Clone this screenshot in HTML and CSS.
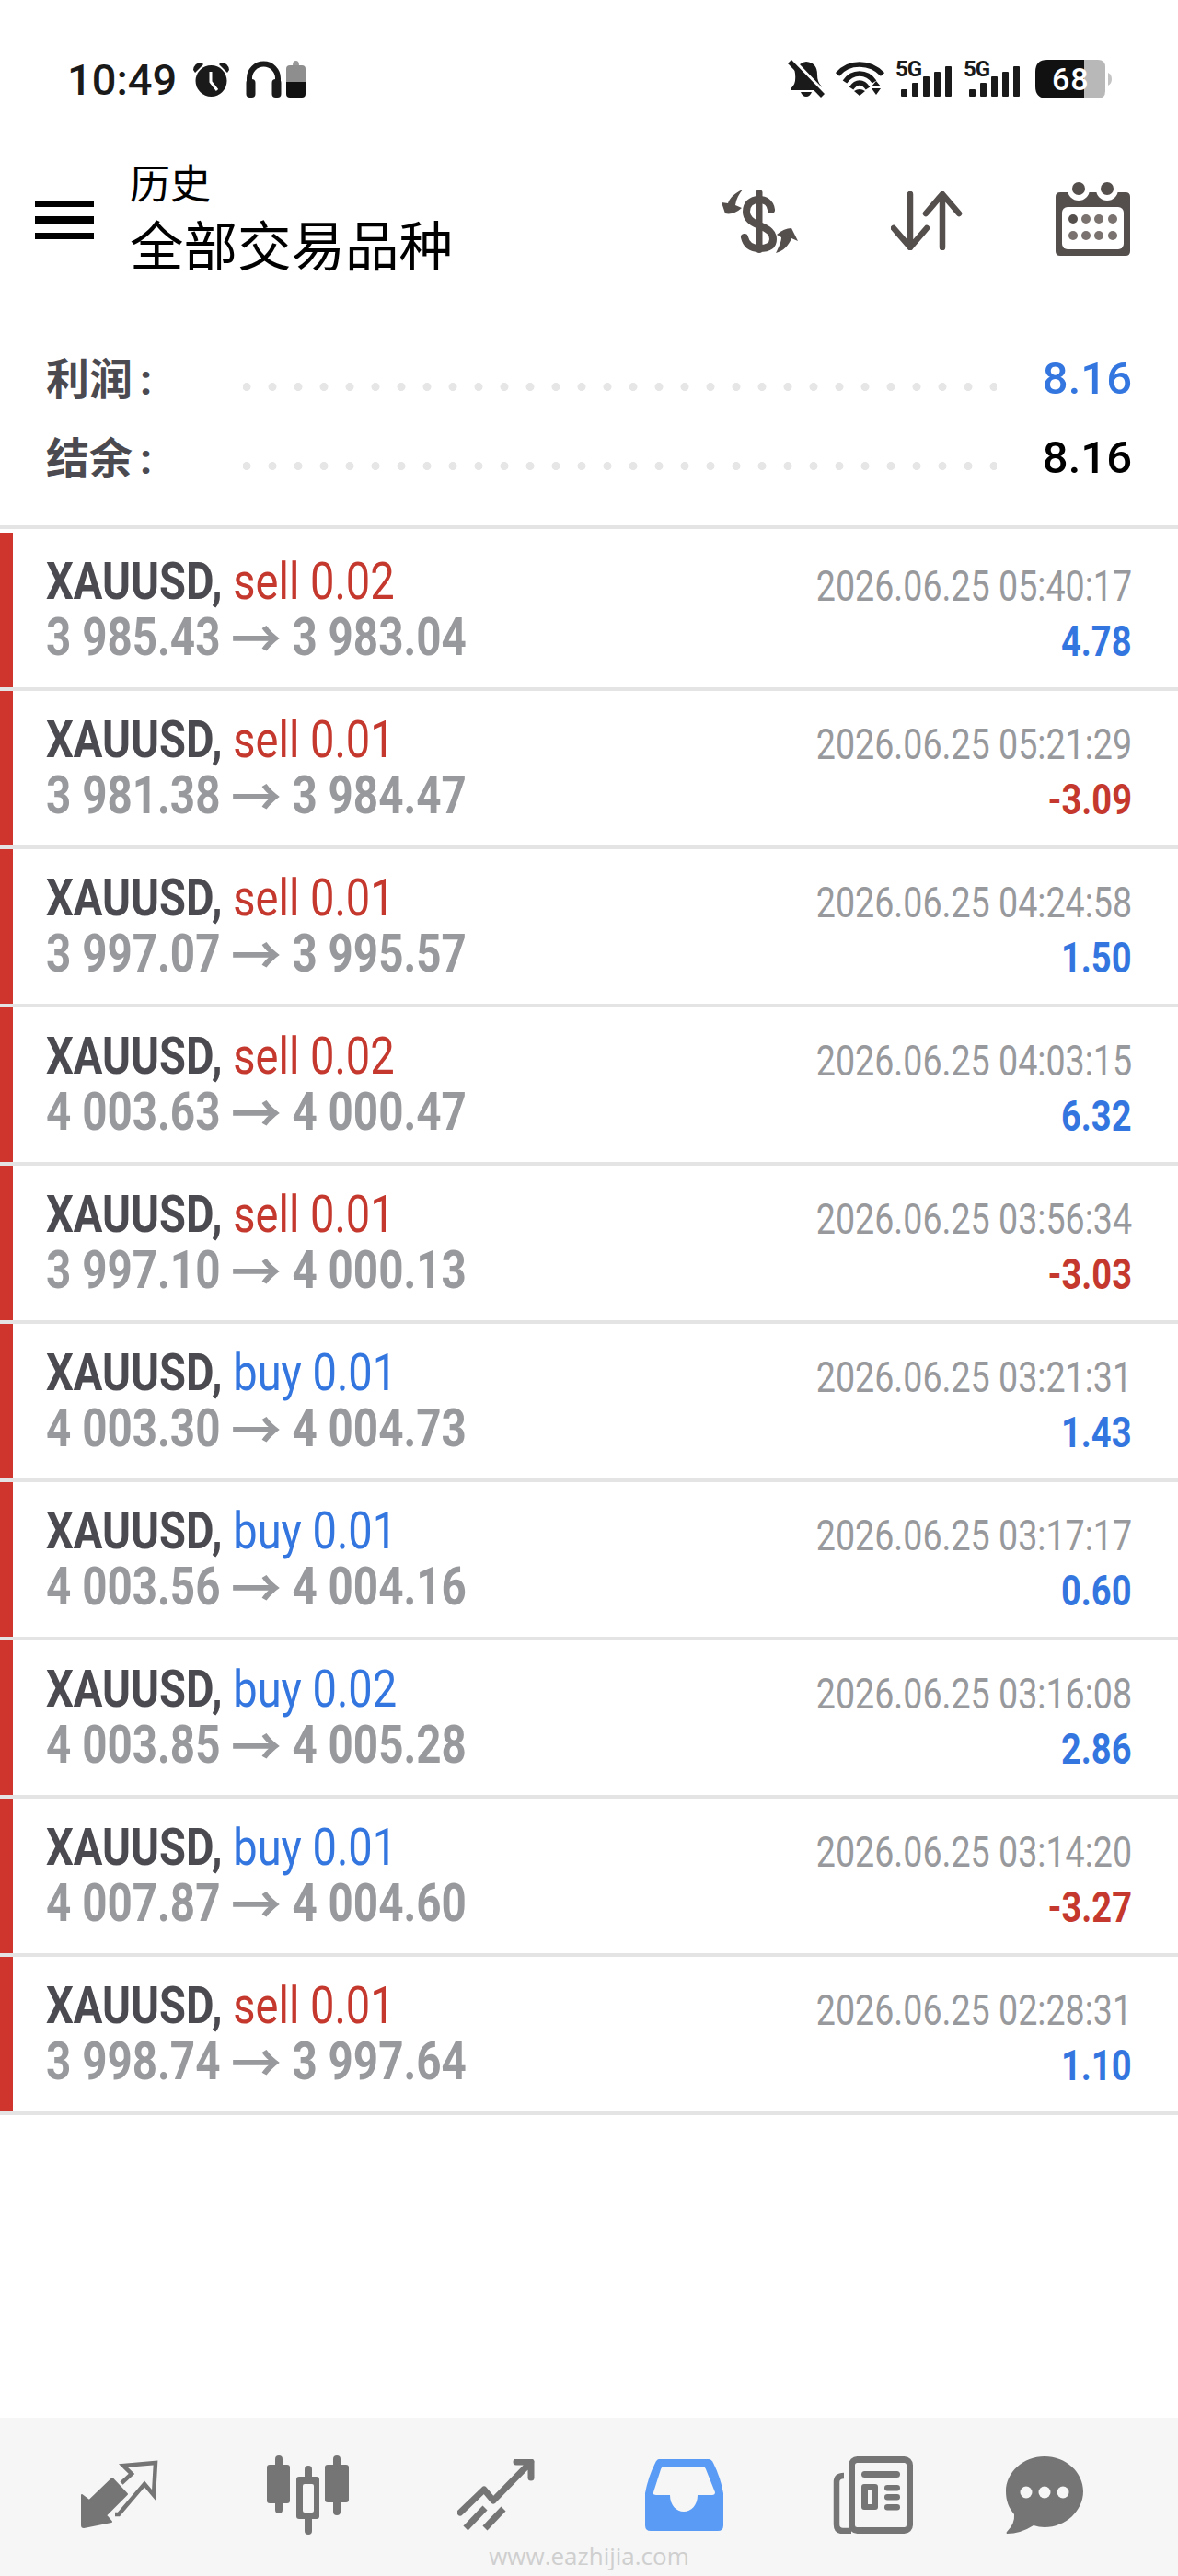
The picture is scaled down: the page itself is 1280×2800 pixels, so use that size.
FILE: index.html
```html
<!DOCTYPE html>
<html lang="zh">
<head>
<meta charset="utf-8">
<title>历史</title>
<link rel="stylesheet" href="styles.css">
</head>
<body>
<div class="page">
  <header class="status">
    <span class="time">10:49</span>
    <svg class="ic-alarm" viewBox="0 0 41 38"><circle cx="20.5" cy="21" r="17" fill="#1a1a1a"/><path d="M20 11v11l7 9" fill="none" stroke="#fff" stroke-width="3"/><path d="M1 9Q2 1 10 1L12 3 3 12Z M40 9Q39 1 31 1L29 3 38 12Z" fill="#1a1a1a"/></svg>
    <svg class="ic-phones" viewBox="0 0 39 40"><path d="M4 24V19a15.500 15.500 0 0 1 31 0v5" fill="none" stroke="#1a1a1a" stroke-width="6"/><rect x="0.500" y="20" width="10" height="20" rx="4" fill="#1a1a1a"/><rect x="28.500" y="20" width="10" height="20" rx="4" fill="#1a1a1a"/></svg>
    <svg class="ic-minibat" viewBox="0 0 21 40"><path d="M7 5Q7 0 10.500 0T14 5Z" fill="#999"/><path d="M0 23V9Q0 5 4 5H17Q21 5 21 9V23Z" fill="#8e8e8e"/><path d="M0 23H21V36Q21 40 17 40H4Q0 40 0 36Z" fill="#111"/></svg>
    <div class="status-right">
      <svg class="ic-bell" viewBox="0 0 40 42"><path d="M7 9 29 33H3Q3 31 6 28 9 24 8 15ZM13 5Q17 2 20 2 32 3 32 16 32 24 36 28L37 30Z" fill="#1a1a1a"/><path d="M14 35H26Q24 40 20 40T14 35Z" fill="#1a1a1a"/><path d="M2 2 38 39" stroke="#1a1a1a" stroke-width="5.500" fill="none"/></svg>
      <svg class="ic-wifi" viewBox="0 0 53 38"><g fill="none" stroke="#1a1a1a" stroke-width="5.500"><path d="M2 14Q11 3 26 3T51 14"/><path d="M10 22Q16 13 26 13T42 22"/><path d="M17 29Q21 23 26 23T35 29"/></g><path d="M20 32 26 37 32 32Q26 28 20 32Z M44 21 49 27H39Z M44 36 49 29H39Z" fill="#1a1a1a"/></svg>
      <svg class="ic-signal" viewBox="0 -8 62 48"><text class="net" x="0" y="17">5G</text><g fill="#1a1a1a"><rect x="6" y="31" width="7" height="8" rx="1"/><rect x="18" y="24" width="7" height="15" rx="1"/><rect x="30" y="17" width="7" height="22" rx="1"/><rect x="42" y="12" width="7" height="27" rx="1"/><rect x="54" y="6" width="7" height="33" rx="1"/></g></svg>
      <svg class="ic-signal" viewBox="0 -8 62 48"><text class="net" x="0" y="17">5G</text><g fill="#1a1a1a"><rect x="6" y="31" width="7" height="8" rx="1"/><rect x="18" y="24" width="7" height="15" rx="1"/><rect x="30" y="17" width="7" height="22" rx="1"/><rect x="42" y="12" width="7" height="27" rx="1"/><rect x="54" y="6" width="7" height="33" rx="1"/></g></svg>
      <svg class="ic-battery" viewBox="0 0 83 42"><path d="M53 0H68Q76 0 76 8V34Q76 42 68 42H53Z" fill="#b8b8b8"/><path d="M13 0H53V42H13Q0 42 0 29V13Q0 0 13 0Z" fill="#111"/><path d="M79 14Q83 16 83 21T79 28Z" fill="#c4c4c4"/><text class="batt" x="18" y="33">68</text></svg>
    </div>
  </header>

  <div class="appbar">
    <div class="burger"><i></i><i></i><i></i></div>
    <div class="titles">
      <div class="title-sm">历史</div>
      <div class="title-lg">全部交易品种</div>
    </div>
    <div class="actions">
      <svg class="ic-dollar" viewBox="0 0 84 71"><g fill="#544e4c"><rect x="38.500" y="1" width="7" height="69" rx="3.500"/><path d="M24 1C15 5 10 10 8 16L1 15 5 27Q14 29 23 21L16 18C17 11 20 6 24 1Z"/><path d="M60 70C64 62 66 57 66 53L61 50Q69 43 77 43L84 57 77 54C74 62 68 68 60 70Z"/></g><path d="M55 23C54 15 48 12 42 12 32 12 28 18 28 25 28 33 34 37 42 40 52 44 57 48 57 55 57 63 50 65 42 65 34 65 28 62 26 53" fill="none" stroke="#544e4c" stroke-width="8" stroke-linecap="round"/></svg>
      <svg class="ic-sort" viewBox="0 0 78 64"><g fill="none" stroke="#544e4c" stroke-width="6.500" stroke-linecap="round" stroke-linejoin="round"><path d="M21 3V61M3 40 21 61 39 40"/><path d="M56 61V4M38 24 56 3 74 24"/></g></svg>
      <svg class="ic-cal" viewBox="0 0 81 80"><path d="M5 11H76Q81 11 81 16V75Q81 80 76 80H5Q0 80 0 75V16Q0 11 5 11Z" fill="#544e4c"/><circle cx="25" cy="8" r="12" fill="#fff"/><circle cx="56" cy="8" r="12" fill="#fff"/><circle cx="25" cy="7" r="7" fill="#544e4c"/><circle cx="56" cy="7" r="7" fill="#544e4c"/><rect x="7" y="27" width="67" height="46" rx="6" fill="#fff"/><g fill="#7a726e"><circle cx="19" cy="40" r="5" fill="#544e4c"/><circle cx="33" cy="40" r="5"/><circle cx="47" cy="40" r="5"/><circle cx="62" cy="40" r="5"/><circle cx="19" cy="58" r="5"/><circle cx="33" cy="58" r="5"/><circle cx="47" cy="58" r="5"/><circle cx="62" cy="58" r="5"/></g></svg>
    </div>
  </div>

  <section class="summary">
    <div class="sum-row"><span class="sum-label">利润<span class="colon">:</span></span><span class="dots"></span><span class="sum-value blue">8.16</span></div>
    <div class="sum-row"><span class="sum-label">结余<span class="colon">:</span></span><span class="dots"></span><span class="sum-value">8.16</span></div>
  </section>

  <main class="list">
    <div class="row"><div class="row-text"><div class="line"><span class="sym">XAUUSD,</span> <span class="red">sell 0.02</span></div><div class="line price">3 985.43 <span class="arrow">→</span> 3 983.04</div></div><div class="row-side"><span class="date">2026.06.25 05:40:17</span><span class="pnl blue">4.78</span></div></div>
    <div class="row"><div class="row-text"><div class="line"><span class="sym">XAUUSD,</span> <span class="red">sell 0.01</span></div><div class="line price">3 981.38 <span class="arrow">→</span> 3 984.47</div></div><div class="row-side"><span class="date">2026.06.25 05:21:29</span><span class="pnl red">-3.09</span></div></div>
    <div class="row"><div class="row-text"><div class="line"><span class="sym">XAUUSD,</span> <span class="red">sell 0.01</span></div><div class="line price">3 997.07 <span class="arrow">→</span> 3 995.57</div></div><div class="row-side"><span class="date">2026.06.25 04:24:58</span><span class="pnl blue">1.50</span></div></div>
    <div class="row"><div class="row-text"><div class="line"><span class="sym">XAUUSD,</span> <span class="red">sell 0.02</span></div><div class="line price">4 003.63 <span class="arrow">→</span> 4 000.47</div></div><div class="row-side"><span class="date">2026.06.25 04:03:15</span><span class="pnl blue">6.32</span></div></div>
    <div class="row"><div class="row-text"><div class="line"><span class="sym">XAUUSD,</span> <span class="red">sell 0.01</span></div><div class="line price">3 997.10 <span class="arrow">→</span> 4 000.13</div></div><div class="row-side"><span class="date">2026.06.25 03:56:34</span><span class="pnl red">-3.03</span></div></div>
    <div class="row"><div class="row-text"><div class="line"><span class="sym">XAUUSD,</span> <span class="blue">buy 0.01</span></div><div class="line price">4 003.30 <span class="arrow">→</span> 4 004.73</div></div><div class="row-side"><span class="date">2026.06.25 03:21:31</span><span class="pnl blue">1.43</span></div></div>
    <div class="row"><div class="row-text"><div class="line"><span class="sym">XAUUSD,</span> <span class="blue">buy 0.01</span></div><div class="line price">4 003.56 <span class="arrow">→</span> 4 004.16</div></div><div class="row-side"><span class="date">2026.06.25 03:17:17</span><span class="pnl blue">0.60</span></div></div>
    <div class="row"><div class="row-text"><div class="line"><span class="sym">XAUUSD,</span> <span class="blue">buy 0.02</span></div><div class="line price">4 003.85 <span class="arrow">→</span> 4 005.28</div></div><div class="row-side"><span class="date">2026.06.25 03:16:08</span><span class="pnl blue">2.86</span></div></div>
    <div class="row"><div class="row-text"><div class="line"><span class="sym">XAUUSD,</span> <span class="blue">buy 0.01</span></div><div class="line price">4 007.87 <span class="arrow">→</span> 4 004.60</div></div><div class="row-side"><span class="date">2026.06.25 03:14:20</span><span class="pnl red">-3.27</span></div></div>
    <div class="row"><div class="row-text"><div class="line"><span class="sym">XAUUSD,</span> <span class="red">sell 0.01</span></div><div class="line price">3 998.74 <span class="arrow">→</span> 3 997.64</div></div><div class="row-side"><span class="date">2026.06.25 02:28:31</span><span class="pnl blue">1.10</span></div></div>
  </main>

  <nav class="nav">
    <svg class="n1" viewBox="0 0 84 76"><path d="M1 38 9 44 34 20 50 37 27 60 33 67 3 73Q1 73 1 71Z" fill="#757575" stroke="#757575" stroke-width="2" stroke-linejoin="round"/><path d="M44 25 55 15 46 6 81 3 79 38 69 26 41 59H37" fill="none" stroke="#757575" stroke-width="4.500"/></svg>
    <svg class="n2" viewBox="0 0 89 86"><g fill="#757575"><rect x="0" y="10" width="25" height="42" rx="3"/><rect x="9" y="0" width="8" height="63" rx="4"/><rect x="63" y="10" width="26" height="41" rx="3"/><rect x="72" y="0" width="8" height="65" rx="4"/><rect x="41" y="11" width="8" height="75" rx="4"/><rect x="32" y="23" width="25" height="46" rx="3"/></g><rect x="39" y="31" width="12" height="31" rx="2" fill="#f6f6f6"/></svg>
    <svg class="n3" viewBox="0 0 84 78"><g fill="none" stroke="#757575" stroke-width="7" stroke-linecap="round" stroke-linejoin="round"><path d="M3 58 29 33 39 45 80 3M64 3H80V20"/><path d="M9 75 30 53" stroke-linecap="butt"/><path d="M30 75 50 54" stroke-linecap="butt"/></g></svg>
    <svg class="n4" viewBox="0 0 85 78"><path d="M15 0H69Q72 0 74 4 82 20 85 37V72Q85 78 79 78H6Q0 78 0 72V37Q3 20 11 4 13 0 15 0Z" fill="#5a9bf6"/><path d="M21 8H62Q65 8 66 11L76 36Q76 39 73 39H57C57 50 50 57 42 57 34 57 27 50 27 39H12Q8 39 9 36L17 11Q18 8 21 8Z" fill="#f6f6f6"/></svg>
    <svg class="n5" viewBox="0 0 88 84"><g fill="none" stroke="#757575"><rect x="20.500" y="3.500" width="63" height="77" rx="6" stroke-width="7"/><path d="M12 21Q4 21 4 28V74Q4 81 11 81H20" stroke-width="6.500"/></g><g fill="#757575"><rect x="31" y="16" width="42" height="7" rx="3.500"/><rect x="31" y="30" width="18" height="28" rx="3"/><rect x="56" y="31" width="17" height="6.500" rx="3.200"/><rect x="56" y="41" width="17" height="6.500" rx="3.200"/><rect x="56" y="52" width="17" height="6.500" rx="3.200"/></g><rect x="38" y="37" width="4" height="15" fill="#f6f6f6"/></svg>
    <svg class="n6" viewBox="0 0 84 84"><path d="M42 0C65 0 84 17 84 38S65 77 42 77Q36 77 30 75 16 84 1 84 0 83 1 82 10 73 9 63C3 56 0 48 0 38 0 17 19 0 42 0Z" fill="#757575"/><g fill="#f6f6f6"><ellipse cx="22" cy="39" rx="6.500" ry="6.500"/><ellipse cx="42" cy="39" rx="6.500" ry="6.500"/><ellipse cx="62" cy="39" rx="6.500" ry="6.500"/></g></svg>
    <span class="mark">www.eazhijia.com</span>
  </nav>
</div>
</body>
</html>
```

FILE: styles.css
```css
* { box-sizing: border-box; }
html, body { margin: 0; padding: 0; background: #fff; }
.page {
  width: 1280px;
  height: 2800px;
  display: flex;
  flex-direction: column;
  font-family: Roboto, "Noto Sans CJK SC", sans-serif;
}
svg { display: block; flex: none; }

/* status bar */
.status { display: flex; align-items: center; height: 172px; padding: 0 72px 0 73px; }
.time { font-size: 47px; font-weight: 500; color: #1a1a1a; width: 136px; }
.ic-alarm { width: 41px; height: 38px; }
.ic-phones { width: 39px; height: 40px; margin-left: 17px; }
.ic-minibat { width: 21px; height: 40px; margin-left: 5px; }
.status-right { margin-left: auto; display: flex; align-items: center; }
.ic-bell { width: 40px; height: 42px; }
.ic-wifi { width: 53px; height: 38px; margin-left: 12px; }
.ic-signal { width: 62px; height: 48px; margin: -8px 0 0 12px; }
.ic-battery { width: 83px; height: 42px; margin-left: 16px; }
.net { font: 700 24px Roboto, sans-serif; fill: #1a1a1a; letter-spacing: -1px; }
.batt { font: 500 34px Roboto, sans-serif; fill: #fff; letter-spacing: 1px; }

/* app bar */
.appbar { display: flex; align-items: center; height: 136px; padding: 0 52px 0 38px; }
.burger { width: 64px; display: flex; flex-direction: column; gap: 10px; margin-top: -2px; }
.burger i { display: block; height: 7.500px; background: #000; }
.titles { margin-left: 39px; color: #000; }
.title-sm { font-size: 44px; line-height: 54px; margin-top: -2px; }
.title-lg { font-size: 58.500px; line-height: 72px; margin-top: 5px; }
.actions { margin-left: auto; display: flex; align-items: center; }
.ic-dollar { width: 84px; height: 71px; }
.ic-sort { width: 78px; height: 64px; margin-left: 101px; }
.ic-cal { width: 81px; height: 80px; margin: -4px 0 0 101px; }

/* summary */
.summary { padding: 60px 50px 0; height: 267px; border-bottom: 4px solid #e4e4e4; }
.sum-row { display: flex; align-items: center; height: 86px; }
.sum-label { width: 214px; margin-bottom: 6px; font-size: 47px; font-weight: 700; color: #4a4a50; }
.colon { margin-left: 8px; }
.dots {
  flex: 1;
  height: 9px;
  margin: 18px 50px 0 0;
  background: radial-gradient(circle, #e6e6e6 4.200px, transparent 4.800px) -10px 0 / 28px 9px repeat-x;
}
.sum-value { font-size: 49px; font-weight: 500; color: #000; }
.blue { color: #3476e0; }
.red { color: #c4382e; }

/* list */
.list { padding-top: 4px; }
.row {
  display: flex;
  justify-content: space-between;
  height: 172px;
  padding-right: 50px;
  border-bottom: 4px solid #e4e4e4;
}
.row-text { flex: 1; border-left: 14px solid #cf352d; padding-left: 36px; }
.line { font-size: 56px; line-height: 61px; white-space: nowrap; transform: scaleX(.84); transform-origin: left; }
.line:first-child { margin-top: 23px; }
.sym { font-weight: 700; color: #4a4a50; }
.price { font-size: 57px; font-weight: 700; color: #98999c; transform: scaleX(.835); }
.line.price { margin-top: -1px; }
.arrow { display: inline-block; margin: 0 4px; transform: translateY(3px) scaleX(1.15); }
.row-side { display: flex; flex-direction: column; align-items: flex-end; padding-top: 30px; }
.date { font-size: 47px; line-height: 56px; color: #98999c; transform: scaleX(.8); transform-origin: right; white-space: nowrap; }
.pnl { font-size: 47px; font-weight: 700; line-height: 64px; transform: scaleX(.81); transform-origin: right; }

/* bottom nav */
.nav {
  position: relative;
  margin-top: auto;
  height: 172px;
  background: #f6f6f6;
  display: flex;
  align-items: center;
  gap: 118px;
  padding: 0 0 4px 88px;
}
.n1 { width: 84px; height: 76px; }
.n2 { width: 89px; height: 86px; }
.n3 { width: 84px; height: 78px; }
.n4 { width: 85px; height: 78px; margin-left: 2px; }
.n5 { width: 88px; height: 84px; margin-left: 1px; }
.n6 { width: 84px; height: 84px; margin-left: -18px; }
.mark {
  position: absolute;
  left: 0;
  right: 0;
  bottom: 4px;
  text-align: center;
  font: 26px "Open Sans", sans-serif;
  color: #cfcfcf;
}
```
